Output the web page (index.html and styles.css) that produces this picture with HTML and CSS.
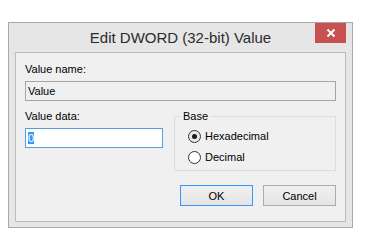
FILE: index.html
```html
<!DOCTYPE html>
<html lang="en">
<head>
    <meta charset="UTF-8">
    <meta name="viewport" content="width=device-width, initial-scale=1.0">
    <title>Edit DWORD (32-bit) Value</title>
    <link rel="stylesheet" href="styles.css">
</head>
<body>
    <div class="window">
        <div class="titlebar">
            <span></span>
            <h1 class="title">Edit DWORD (32-bit) Value</h1>
            <button class="close" title="Close">
                <svg width="10" height="10" viewBox="0 0 10 10">
                    <path d="M1.5 1.5 L8.5 8.5 M8.5 1.5 L1.5 8.5" stroke="#fff" stroke-width="2" fill="none"/>
                </svg>
            </button>
        </div>

        <div class="client">
            <label class="label">Value name:</label>
            <div class="field readonly">Value</div>

            <div class="data-row">
                <div class="data-col">
                    <label class="label">Value data:</label>
                    <div class="field focused"><span class="sel">0</span></div>
                </div>

                <fieldset class="base">
                    <legend>Base</legend>
                    <div class="radio checked"><span class="dot"></span>Hexadecimal</div>
                    <div class="radio"><span class="dot"></span>Decimal</div>
                </fieldset>
            </div>

            <div class="buttons">
                <button class="btn default">OK</button>
                <button class="btn">Cancel</button>
            </div>
        </div>
    </div>
</body>
</html>
```

FILE: styles.css
```css
* {
    box-sizing: border-box;
}

body {
    margin: 0;
    padding: 22px 0 0 8px;
    background: #fff;
    font-family: "Liberation Sans", Arial, sans-serif;
    font-size: 11px;
    color: #000;
}

.window {
    width: 345px;
    height: 206px;
    border: 1px solid #a9a9a9;
    background: #e6e6e6;
    padding: 0 6px 5px;
    display: flex;
    flex-direction: column;
}

.titlebar {
    height: 29px;
    display: grid;
    grid-template-columns: 1fr auto 1fr;
    align-items: start;
}

.title {
    margin: 0;
    padding-top: 6px;
    font-size: 15px;
    line-height: 17px;
    font-weight: normal;
    color: #2b2b2b;
    white-space: nowrap;
}

.close {
    justify-self: end;
    width: 31px;
    height: 20px;
    border: none;
    padding: 0;
    background: #c75050;
    display: flex;
    align-items: center;
    justify-content: center;
}

.client {
    flex: 1;
    border: 1px solid #bcbcbc;
    background: #f0f0f0;
    padding: 10px 9px 0;
}

.label {
    display: block;
    font-size: 11px;
    line-height: 13px;
}

.field {
    margin-top: 5px;
    height: 20px;
    border: 1px solid #a5a5a5;
    padding: 0 2px;
    font-size: 11px;
    line-height: 18px;
    white-space: nowrap;
}

.field.readonly {
    background: #f0f0f0;
}

.field.focused {
    border-color: #569de5;
    background: #fff;
}

.sel {
    background: #3399ff;
    color: #fff;
}

.data-row {
    display: grid;
    grid-template-columns: 138px 1fr;
    column-gap: 11px;
    margin-top: 9px;
}

.base {
    margin: 0;
    min-width: 0;
    border: 1px solid #dcdcdc;
    padding: 7px 6px 6px;
}

.base legend {
    padding: 0 2px;
    font-size: 11px;
    line-height: 13px;
}

.radio {
    display: flex;
    align-items: center;
    gap: 4px;
    height: 13px;
    margin-left: 7px;
    line-height: 13px;
}

.radio + .radio {
    margin-top: 8px;
}

.dot {
    width: 13px;
    height: 13px;
    border: 1px solid #333;
    border-radius: 50%;
    background: #fff;
    display: flex;
    align-items: center;
    justify-content: center;
}

.radio.checked .dot {
    background: #e8e8e8;
}

.radio.checked .dot::after {
    content: "";
    width: 5px;
    height: 5px;
    border-radius: 50%;
    background: #1a1a1a;
}

.buttons {
    display: flex;
    justify-content: flex-end;
    gap: 10px;
    margin-top: 14px;
}

.btn {
    width: 73px;
    height: 21px;
    padding: 0;
    border: 1px solid #acacac;
    background: linear-gradient(#f0f0f0, #e5e5e5);
    font-family: "Liberation Sans", Arial, sans-serif;
    font-size: 11px;
    color: #000;
}

.btn.default {
    border-color: #3399ff;
}
```
